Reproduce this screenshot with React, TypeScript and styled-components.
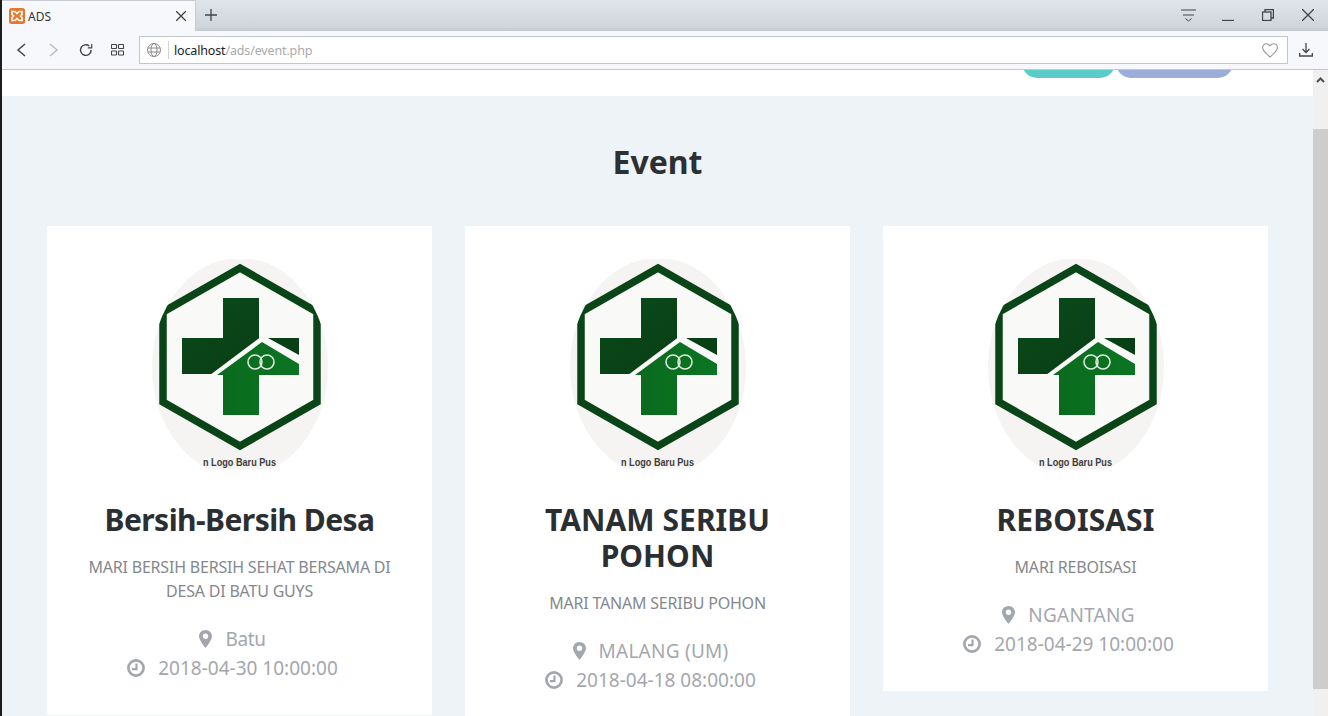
import React from "react";
import styled, { createGlobalStyle } from "styled-components";

const Global = createGlobalStyle`
  html, body { margin: 0; padding: 0; height: 716px; overflow: hidden; background: #fff; }
  * { box-sizing: border-box; }
`;
const Shell = styled.div`
  width: 1328px; height: 716px; overflow: hidden; display: flex; flex-direction: column;
  border-left: 2px solid #1d1d1d;
  font-family: "Open Sans", "Noto Sans", sans-serif;
`;
const TabBar = styled.div`
  height: 31px; flex: none; display: flex; align-items: stretch;
  background: linear-gradient(#e0e5ec, #d0d5dc 90%, #c8ccd2);
  border-bottom: 1px solid #c4c8cc;
`;
const Tab = styled.div`
  width: 194px; background: #f6f8fb; display: flex; align-items: center;
  padding-left: 7px; margin-bottom: -1px; border-top: 1px solid #c8ccd0; border-right: 1px solid #c8ccd0;
`;
const TabTitle = styled.span`
  font-family: "Noto Sans", sans-serif; font-size: 12px; color: #333; margin-left: 3px; flex: 1;
`;
const TabClose = styled.span`display: flex; margin-right: 9px;`;
const NewTab = styled.span`display: flex; align-items: center; margin-left: 9px;`;
const Spacer = styled.div`flex: 1;`;
const WinControls = styled.div`display: flex; align-items: center;`;
const WinBtn = styled.span<{ $w: number }>`
  display: flex; justify-content: center; align-items: center; width: ${p => p.$w}px;
`;
const Toolbar = styled.div`
  height: 39px; flex: none; background: #f6f8fb; border-bottom: 1px solid #c6c9cc;
  display: flex; align-items: center; padding-left: 14px;
`;
const NavIcon = styled.span<{ $w: number }>`display: flex; width: ${p => p.$w}px;`;
const AddressBar = styled.div`
  width: 1149px; height: 28px; background: #fff; border: 1px solid #c4c7ca; margin-left: 14px;
  display: flex; align-items: center; padding-left: 7px; padding-right: 9px;
`;
const AddrDivider = styled.span`width: 1px; height: 18px; background: #cfd2d5; margin: 0 5px 0 7px;`;
const UrlHost = styled.span`font-family: "Noto Sans", sans-serif; font-size: 12.5px; letter-spacing: -0.15px; color: #222;`;
const UrlPath = styled.span`font-family: "Noto Sans", sans-serif; font-size: 12.5px; letter-spacing: -0.15px; color: #aaa;`;
const ToolEnd = styled.span`display: flex; margin-left: 11px;`;
const Viewport = styled.div`flex: 1; display: flex; min-height: 0;`;
const Page = styled.div`
  flex: 1; min-width: 0; overflow: hidden; display: flex; flex-direction: column;
`;
const HeroStrip = styled.div`
  height: 26px; flex: none; background: #fff; overflow: hidden; display: flex; justify-content: flex-end;
  gap: 1px; padding-right: 80px;
`;
const HeroButton = styled.div<{ $w: number; $c: string }>`
  width: ${p => p.$w}px; height: 50px; margin-top: -42px; border-radius: 15px; background: ${p => p.$c}; flex: none;
`;
const Section = styled.div`
  flex: 1; background: #eef3f7; padding: 44px 45px 0;
`;
const Heading = styled.h2`
  margin: 0 0 42px; text-align: center; font-size: 32px; line-height: 44px; font-weight: 700; color: #2c3033;
  font-family: "Noto Sans", sans-serif;
`;
const Cards = styled.div`display: grid; grid-template-columns: repeat(3, 385px); column-gap: 33px; align-items: start;`;
const Card = styled.div`
  background: #fff; padding: 33px 33px 33px; text-align: center;
`;
const LogoWrap = styled.div`display: flex; justify-content: center; height: 210px; margin-bottom: 33px;`;
const Title = styled.h3<{ $caps: boolean }>`
  margin: 0 0 17px; font-family: "Noto Sans", sans-serif; font-size: 30px; line-height: 36px; font-weight: 700;
  color: #2b2f32; letter-spacing: ${p => (p.$caps ? "0.05px" : "-0.55px")};
`;
const Desc = styled.p`
  margin: 0 0 21px; font-family: "Noto Sans", sans-serif; font-size: 16px; line-height: 24px; color: #84888d;
  font-weight: 400; letter-spacing: -0.2px; text-transform: uppercase;
`;
const MetaRow = styled.div<{ $spread?: number }>`
  display: flex; justify-content: center; align-items: center; gap: 13px; height: 29px; padding-right: 14px;
  font-family: "Noto Sans", sans-serif; font-size: 19px; color: #a3a7ad; letter-spacing: ${p => p.$spread ?? 0}px;
`;
const MetaIcon = styled.span`display: flex;`;
const Scrollbar = styled.div`
  width: 15px; flex: none; background: #f0f0f0; display: flex; flex-direction: column; align-items: center;
`;
const ScrollArrow = styled.span`display: flex; height: 59px; padding-top: 7px;`;
const ScrollThumb = styled.div`width: 100%; height: 560px; background: #cdcdcd;`;

const Logo = ({ id }: { id: string }) => (
  <svg width="176" height="210" viewBox="0 0 176 210">
    <defs>
      <linearGradient id={`dk${id}`} x1="0" y1="0" x2="1" y2="1">
        <stop offset="0" stopColor="#0a4a1a" />
        <stop offset="1" stopColor="#083c14" />
      </linearGradient>
      <linearGradient id={`lt${id}`} x1="0" y1="0" x2="1" y2="0">
        <stop offset="0" stopColor="#0a6a1e" />
        <stop offset="1" stopColor="#0b7522" />
      </linearGradient>
      <clipPath id={`oval${id}`}><ellipse cx="88" cy="108" rx="88" ry="109" /></clipPath>
    </defs>
    <g clipPath={`url(#oval${id})`}>
      <rect x="0" y="0" width="176" height="210" fill="#f5f4f3" />
      <polygon points="88,9 165,53 165,143 88,187 11,143 11,53" fill="#f9f9f8" stroke="#0a4518" strokeWidth="7.500" strokeLinejoin="miter" />
      <path d="M71 39h36v40h40v36H30V79h41z" fill={`url(#dk${id})`} />
      <polygon points="58,116 110,77 116,79 147,96 147,116" fill="#f9f9f8" />
      <polygon points="65,116 110,83 147,105 147,116 107,116 107,156 71,156 71,116" fill={`url(#lt${id})`} />
      <circle cx="103" cy="103" r="7" fill="none" stroke="#dfe9dc" strokeWidth="1.600" />
      <circle cx="115" cy="103" r="7" fill="none" stroke="#dfe9dc" strokeWidth="1.600" />
    </g>
    <text x="51" y="206.500" textLength="73" lengthAdjust="spacingAndGlyphs" fontSize="11" fontWeight="700" fontFamily="Liberation Sans, sans-serif" fill="#3c3c3c">
      n Logo Baru Pus
    </text>
  </svg>
);
const Pin = () => (
  <svg width="13" height="18" viewBox="0 0 13 18"><path fillRule="evenodd" d="M6.500 0C2.900 0 0 2.800 0 6.300 0 10.400 6.500 18 6.500 18S13 10.400 13 6.300C13 2.800 10.100 0 6.500 0zm0 9a2.700 2.700 0 1 1 0-5.400 2.700 2.700 0 0 1 0 5.400z" fill="#a3a7ad" /></svg>
);
const Clock = () => (
  <svg width="18" height="18" viewBox="0 0 18 18" fill="none" stroke="#a3a7ad" strokeWidth="2.700"><circle cx="9" cy="9" r="7.600" /><path d="M9.500 4.500V10.200H5" strokeWidth="2.200" /></svg>
);
const events = [
  { t: "Bersih-Bersih Desa", caps: false, d: "MARI BERSIH BERSIH SEHAT BERSAMA DI DESA DI BATU GUYS", p: "Batu", ls: -0.4, w: "2018-04-30 10:00:00" },
  { t: "TANAM SERIBU POHON", caps: true, d: "MARI TANAM SERIBU POHON", p: "MALANG (UM)", ls: 0.25, w: "2018-04-18 08:00:00" },
  { t: "REBOISASI", caps: true, d: "MARI REBOISASI", p: "NGANTANG", ls: 0.25, w: "2018-04-29 10:00:00" },
];
const S = { fill: "none", stroke: "#444", strokeWidth: 1.3 };

export default function App() {
  return (
    <Shell>
      <Global />
      <TabBar>
        <Tab>
          <svg width="16" height="16" viewBox="0 0 16 16"><rect width="16" height="16" rx="2.500" fill="#e9772a" /><path d="M3 3.500h3l2 2 2-2h3v3l-1.500 1.500 1.500 1.500v3h-3l-2-2-2 2H3v-3l1.500-1.500L3 6.500z" fill="none" stroke="#fff" strokeWidth="1.700" /></svg>
          <TabTitle>ADS</TabTitle>
          <TabClose><svg width="10" height="10" viewBox="0 0 10 10" {...S}><path d="M0 0l10 10M10 0L0 10" /></svg></TabClose>
        </Tab>
        <NewTab><svg width="12" height="12" viewBox="0 0 12 12" {...S}><path d="M6 0v12M0 6h12" /></svg></NewTab>
        <Spacer />
        <WinControls>
          <WinBtn $w={40}><svg width="15" height="13" viewBox="0 0 15 13" {...S} strokeWidth={1}><path d="M0 1h15M2 6h11M4.500 9.500L7.500 12l3-2.500" /></svg></WinBtn>
          <WinBtn $w={40}><svg width="12" height="12" viewBox="0 0 12 12" {...S}><path d="M0 11.500h12" /></svg></WinBtn>
          <WinBtn $w={40}><svg width="12" height="12" viewBox="0 0 12 12" {...S}><rect x="0.500" y="3" width="8.500" height="8.500" /><path d="M3 3V.7h8.400V9H9" /></svg></WinBtn>
          <WinBtn $w={40}><svg width="12" height="12" viewBox="0 0 12 12" {...S}><path d="M0 0l12 12M12 0L0 12" /></svg></WinBtn>
        </WinControls>
      </TabBar>
      <Toolbar>
        <NavIcon $w={32}><svg width="11" height="14" viewBox="0 0 11 14" fill="none" stroke="#444" strokeWidth="1.500"><path d="M9 1L2 7l7 6" /></svg></NavIcon>
        <NavIcon $w={31}><svg width="11" height="14" viewBox="0 0 11 14" fill="none" stroke="#bbb" strokeWidth="1.500"><path d="M2 1l7 6-7 6" /></svg></NavIcon>
        <NavIcon $w={32}><svg width="14" height="14" viewBox="0 0 15 15" fill="none" stroke="#444" strokeWidth="1.500"><path d="M13 7.500A5.700 5.700 0 1 1 11 3.200" /><path d="M13.600 1v4.200H9.400" strokeWidth="1.300" /></svg></NavIcon>
        <NavIcon $w={14}><svg width="13" height="12" viewBox="0 0 13 12" {...S} strokeWidth={1.1}><rect x=".5" y=".5" width="5" height="4" rx=".8" /><rect x="7.500" y=".5" width="5" height="4" rx=".8" /><rect x=".5" y="7" width="5" height="4" rx=".8" /><rect x="7.500" y="7" width="5" height="4" rx=".8" /></svg></NavIcon>
        <AddressBar>
          <svg width="14" height="14" viewBox="0 0 14 14" fill="none" stroke="#888" strokeWidth="1"><circle cx="7" cy="7" r="6.500" /><ellipse cx="7" cy="7" rx="3" ry="6.500" /><path d="M1 5h12M1 9h12" /></svg>
          <AddrDivider />
          <UrlHost>localhost</UrlHost><UrlPath>/ads/event.php</UrlPath>
          <Spacer />
          <svg width="16" height="15" viewBox="0 0 16 15" fill="none" stroke="#999" strokeWidth="1.100"><path d="M8 14C3 10 .6 7.500.6 4.600.6 2.400 2.300.8 4.300.8 5.800.8 7.200 1.700 8 3c.8-1.300 2.200-2.200 3.700-2.200 2 0 3.700 1.600 3.700 3.800C15.400 7.500 13 10 8 14z" /></svg>
        </AddressBar>
        <ToolEnd><svg width="14" height="14" viewBox="0 0 14 14" {...S}><path d="M7 0v9M3.500 6L7 9.500 10.500 6M.7 10v3h12.600v-3" /></svg></ToolEnd>
      </Toolbar>
      <Viewport>
        <Page>
          <HeroStrip>
            <HeroButton $w={93} $c="#5bcbc9" />
            <HeroButton $w={117} $c="#9badd8" />
          </HeroStrip>
          <Section>
            <Heading>Event</Heading>
            <Cards>
              {events.map((e, i) => (
                <Card key={e.t}>
                  <LogoWrap><Logo id={String(i)} /></LogoWrap>
                  <Title $caps={e.caps}>{e.t}</Title>
                  <Desc>{e.d}</Desc>
                  <MetaRow $spread={e.ls}><MetaIcon><Pin /></MetaIcon>{e.p}</MetaRow>
                  <MetaRow><MetaIcon><Clock /></MetaIcon>{e.w}</MetaRow>
                </Card>
              ))}
            </Cards>
          </Section>
        </Page>
        <Scrollbar>
          <ScrollArrow><svg width="9" height="6" viewBox="0 0 9 6" fill="none" stroke="#505050" strokeWidth="2"><path d="M1 5l3.500-3.500L8 5" /></svg></ScrollArrow>
          <ScrollThumb />
        </Scrollbar>
      </Viewport>
    </Shell>
  );
}
